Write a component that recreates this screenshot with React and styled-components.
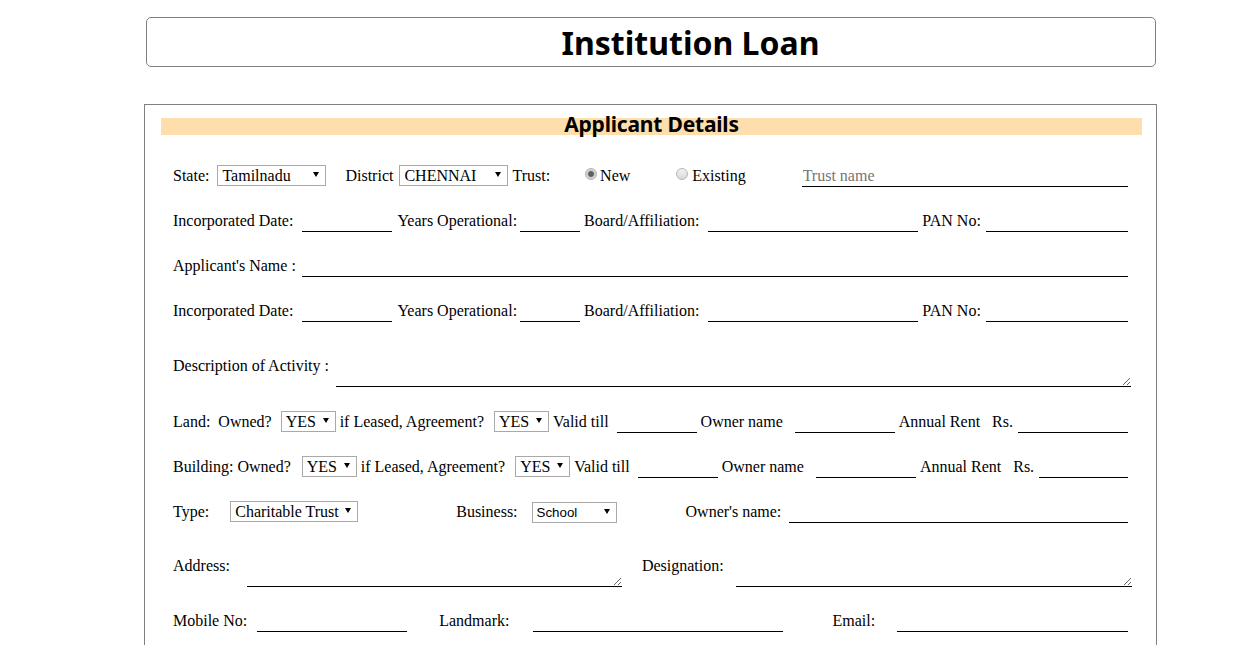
import React from "react";
import styled, { createGlobalStyle } from "styled-components";

const GlobalStyle = createGlobalStyle`
	html,
	body {
		margin: 0;
		overflow: hidden;
		background: #fff;
	}
	body {
		font-family: "Liberation Serif", "Times New Roman", serif;
		font-size: 16px;
		color: #000;
	}
`;

const Page = styled.div`
	padding: 17px 0 40px;
`;

const Header = styled.header`
	margin-left: 146px;
	width: 1010px;
	box-sizing: border-box;
	border: 1px solid #808080;
	border-radius: 5px;
	padding: 3px 0 1px 79px;
	text-align: center;
`;

const Title = styled.h1`
	margin: 0;
	font: bold 32px/44px "Noto Sans", sans-serif;
	color: #000;
`;

const FormBox = styled.form`
	margin: 37px 0 0 144px;
	width: 1013px;
	box-sizing: border-box;
	border: 1px solid #808080;
	padding: 13px 28px 40px;
`;

const SectionBar = styled.h3`
	margin: 0 -14px 0 -12px;
	height: 13px;
	padding-bottom: 4px;
	background: #ffdead;
	text-align: center;
	font: bold 21px/13px "Noto Sans", sans-serif;
	letter-spacing: -0.2px;
	color: #000;
`;

const Fields = styled.div`
	display: flex;
	flex-direction: column;
	gap: 24px;
	margin-top: 30px;
`;

const Row = styled.div`
	display: flex;
	align-items: ${(p) => (p.$tall ? "flex-end" : "baseline")};
	height: ${(p) => (p.$tall ? 40 : 21)}px;
	margin-top: ${(p) => p.$mt || 0}px;
`;

const Label = styled.span`
	flex-shrink: 0;
	margin-left: ${(p) => p.$ml || 0}px;
	margin-bottom: ${(p) => (p.$tall ? 12 : 0)}px;
	line-height: 18px;
	white-space: pre;
`;

const Line = styled.input`
	box-sizing: border-box;
	height: 21px;
	width: ${(p) => (p.$w ? `${p.$w}px` : "auto")};
	flex: ${(p) => (p.$w ? "0 0 auto" : "1 1 0")};
	min-width: 0;
	margin: 0 0 0 ${(p) => p.$ml || 0}px;
	padding: 1px;
	border: none;
	border-bottom: 1px solid #000;
	border-radius: 0;
	background: transparent;
	font: 16px/18px "Liberation Serif", serif;
	color: #000;
	outline: none;

	&::placeholder {
		color: #757575;
	}
`;

const TextBox = styled.textarea`
	box-sizing: border-box;
	flex-shrink: 0;
	height: 40px;
	width: ${(p) => p.$w}px;
	margin: 0 0 0 ${(p) => p.$ml || 0}px;
	padding: 2px;
	border: none;
	border-bottom: 1px solid #000;
	border-radius: 0;
	background: transparent;
	font: 16px/18px "Liberation Serif", serif;
	outline: none;
`;

const SelectWrap = styled.span`
	position: relative;
	display: inline-flex;
	flex-shrink: 0;
	margin-left: ${(p) => p.$ml || 0}px;

	&::after {
		content: "";
		position: absolute;
		right: 7px;
		top: 7px;
		border-left: 3px solid transparent;
		border-right: 3px solid transparent;
		border-top: 5px solid #000;
		pointer-events: none;
	}
`;

const Select = styled.select`
	appearance: none;
	-webkit-appearance: none;
	box-sizing: border-box;
	height: 21px;
	width: ${(p) => p.$w}px;
	margin: 0;
	padding: 0 16px 0 4px;
	border: 1px solid #a9a9a9;
	border-radius: 0;
	background: #fff;
	color: #000;
	font: ${(p) =>
		p.$sans
			? '13.33px "Liberation Sans", Arial, sans-serif'
			: '16px "Liberation Serif", serif'};
	outline: none;
`;

const Radio = styled.input.attrs({ type: "radio" })`
	appearance: none;
	-webkit-appearance: none;
	flex-shrink: 0;
	align-self: flex-start;
	box-sizing: border-box;
	width: 12px;
	height: 12px;
	margin: 3px 0 0 ${(p) => p.$ml || 0}px;
	border: 1px solid #b5b5b5;
	border-radius: 50%;
	background: linear-gradient(#f3f3f3, #d9d9d9);

	&:checked {
		background: radial-gradient(
			circle,
			#5f5f5f 0,
			#5f5f5f 2.4px,
			#c9c9c9 3.4px,
			#e9e9e9 100%
		);
	}
`;

const Drop = ({ ml, w, sans, options }) => (
	<SelectWrap $ml={ml}>
		<Select $w={w} $sans={sans} defaultValue={options[0]}>
			{options.map((o) => (
				<option key={o}>{o}</option>
			))}
		</Select>
	</SelectWrap>
);

const OrgRow = ({ mt }) => (
	<Row $mt={mt}>
		<Label>Incorporated Date:</Label>
		<Line $w={90} $ml={9} />
		<Label $ml={5}>Years Operational:</Label>
		<Line $w={60} $ml={3} />
		<Label $ml={4}>Board/Affiliation:</Label>
		<Line $w={210} $ml={9} />
		<Label $ml={4}>PAN No:</Label>
		<Line $ml={5} />
	</Row>
);

const PremisesRow = ({ title, first }) => (
	<Row>
		<Label>{title}</Label>
		<Drop ml={first} w={55} options={["YES", "NO"]} />
		<Label $ml={4}>if Leased, Agreement?</Label>
		<Drop ml={10} w={55} options={["YES", "NO"]} />
		<Label $ml={4}>Valid till</Label>
		<Line $w={80} $ml={8} />
		<Label $ml={4}>Owner name</Label>
		<Line $w={100} $ml={12} />
		<Label $ml={4}>Annual Rent</Label>
		<Label $ml={12}>Rs.</Label>
		<Line $ml={5} />
	</Row>
);

const App = () => {
	return (
		<Page>
			<GlobalStyle />
			<Header>
				<Title>Institution Loan</Title>
			</Header>

			<FormBox onSubmit={(e) => e.preventDefault()}>
				<SectionBar>Applicant Details</SectionBar>

				<Fields>
					<Row>
						<Label>State:</Label>
						<Drop ml={8} w={109} options={["Tamilnadu", "Kerala", "Karnataka"]} />
						<Label $ml={19}>District</Label>
						<Drop ml={6} w={109} options={["CHENNAI", "MADURAI", "SALEM"]} />
						<Label $ml={4}>Trust:</Label>
						<Radio name='trust' $ml={35} defaultChecked />
						<Label $ml={3}>New</Label>
						<Radio name='trust' $ml={46} />
						<Label $ml={4}>Existing</Label>
						<Line $ml={56} placeholder='Trust name' />
					</Row>

					<OrgRow mt={1} />

					<Row>
						<Label>Applicant's Name :</Label>
						<Line $ml={6} />
					</Row>

					<OrgRow />

					<Row $tall $mt={1}>
						<Label $tall>Description of Activity :</Label>
						<TextBox $w={795} $ml={7} />
					</Row>

					<PremisesRow title={"Land:\u00a0 Owned?"} first={9} />
					<PremisesRow title='Building: Owned?' first={11} />

					<Row>
						<Label>Type:</Label>
						<Drop
							ml={21}
							w={128}
							options={["Charitable Trust", "Society", "Company"]}
						/>
						<Label $ml={98}>Business:</Label>
						<Drop ml={14} w={85} sans options={["School", "College"]} />
						<Label $ml={69}>Owner's name:</Label>
						<Line $ml={8} />
					</Row>

					<Row $tall $mt={1}>
						<Label $tall>Address:</Label>
						<TextBox $w={375} $ml={17} />
						<Label $tall $ml={20}>
							Designation:
						</Label>
						<TextBox $w={396} $ml={12} />
					</Row>

					<Row>
						<Label>Mobile No:</Label>
						<Line $w={150} $ml={10} />
						<Label $ml={32}>Landmark:</Label>
						<Line $w={250} $ml={24} />
						<Label $ml={49}>Email:</Label>
						<Line $ml={22} />
					</Row>
				</Fields>
			</FormBox>
		</Page>
	);
};

export default App;
